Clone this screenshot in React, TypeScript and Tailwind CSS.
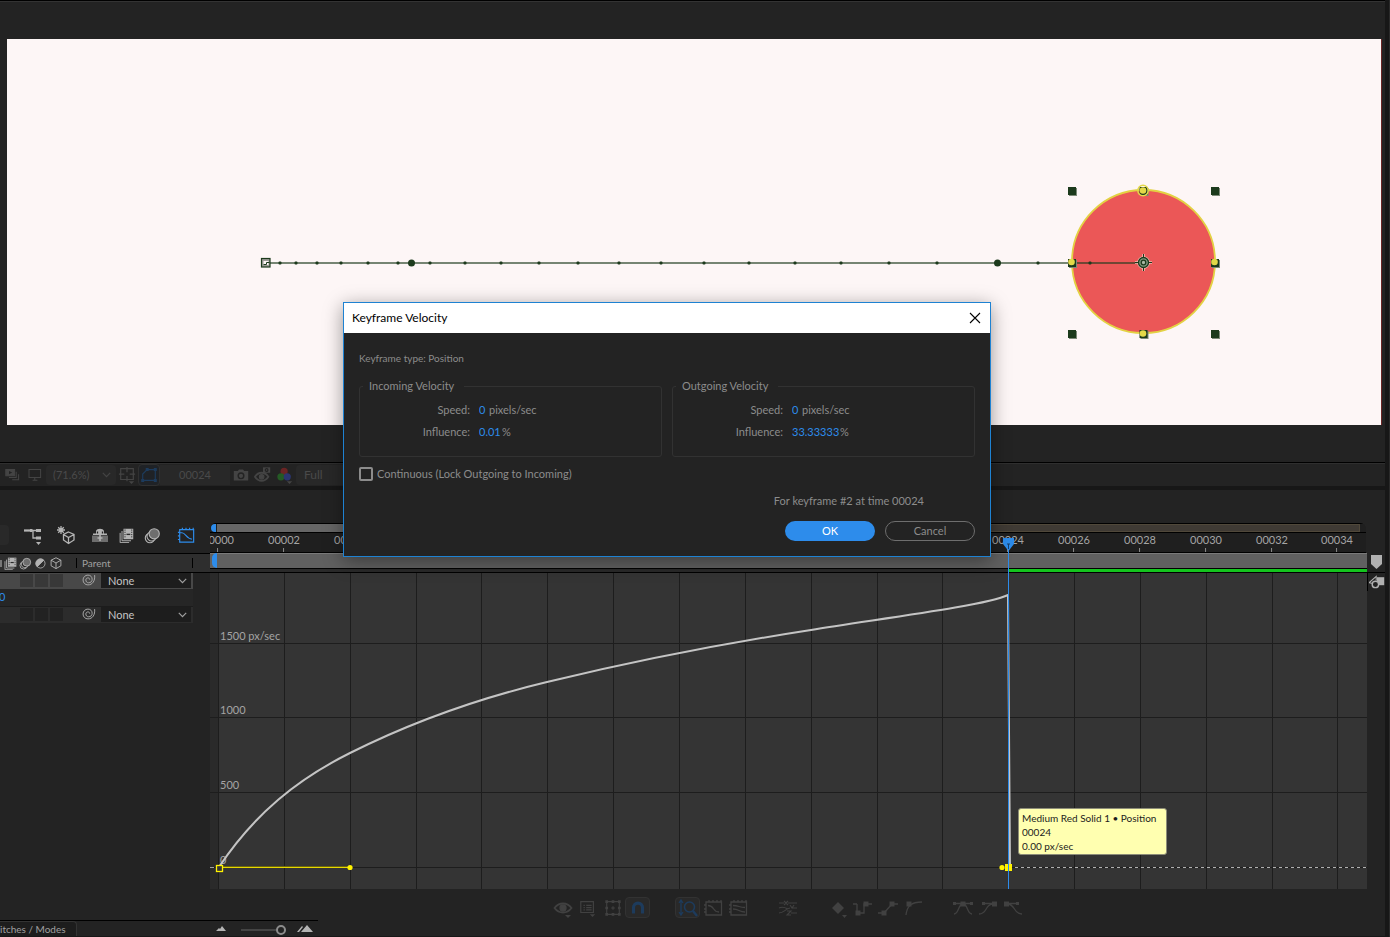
import { useState } from "react";
import type { ReactNode } from "react";

const STEP = 65.85;
const ORIGIN = 8;
const FRAMES = Array.from({ length: 18 }, (_, i) => i * 2);
const VALUE_LINES = [
  { y: 70, text: "1500 px/sec" },
  { y: 144, text: "1000" },
  { y: 219, text: "500" },
  { y: 294, text: "0" },
];
const PATH_DOTS = [
  273, 289, 310, 334, 361, 391, 423, 458, 494, 532, 571, 612, 654, 697, 742, 788, 834, 882, 930, 1031, 1083,
];

const frameLabel = (n: number) => String(n).padStart(5, "0");

function Icon({ size = 20, className = "", children }: { size?: number; className?: string; children: ReactNode }) {
  return (
    <svg
      width={size}
      height={size}
      viewBox="0 0 20 20"
      fill="none"
      stroke="currentColor"
      strokeWidth={1.3}
      className={className}
      aria-hidden="true"
    >
      {children}
    </svg>
  );
}

function Chevron({ className = "" }: { className?: string }) {
  return (
    <svg width="9" height="6" viewBox="0 0 9 6" fill="none" stroke="currentColor" strokeWidth="1.2" className={className} aria-hidden="true">
      <path d="M.8.8 4.5 4.6 8.2.8" />
    </svg>
  );
}

function Composition() {
  return (
    <div className="ml-[7px] mr-[3px] mt-[37px] h-[386px] overflow-hidden border-r border-[#6b2525] bg-[#fdf6f6]">
      <svg width="100%" height="386" role="img" aria-label="Composition view">
        <circle cx="1136.5" cy="222.5" r="71.5" fill="#eb5757" stroke="#e3d243" strokeWidth="1.8" />
        {/* motion path */}
        <line x1="263" x2="1136" y1="224" y2="224" stroke="#1c3a1c" strokeOpacity=".6" strokeWidth="2" />
        {PATH_DOTS.map((x) => (
          <rect key={x} x={x - 1.5} y="222.5" width="3" height="3" rx="1" fill="#1c3a1c" />
        ))}
        <circle cx="404.5" cy="224" r="3.5" fill="#1c3a1c" />
        <circle cx="990.5" cy="224" r="3.5" fill="#1c3a1c" />
        <rect x="254.5" y="219.5" width="8.5" height="8.5" fill="#9d9d98" stroke="#1c3a1c" strokeWidth="1.2" />
        <path d="M256.5 222h5v4h-5z" fill="#fdf6f6" />
        <path d="M256.5 225.5h3v-2h3" stroke="#1c3a1c" fill="none" />
        {/* layer handles */}
        {[1065, 1136.5, 1208].map((x) =>
          [152, 224, 295].map((y) =>
            x === 1136.5 && y === 224 ? null : (
              <g key={`${x}-${y}`}>
                <rect x={x - 3} y={y - 3} width="8" height="8" fill="#7d8a78" />
                <rect x={x - 4} y={y - 4} width="8" height="8" fill="#1c3a1c" />
              </g>
            ),
          ),
        )}
        <g fill="#e3d948">
          <circle cx="1064.5" cy="223" r="3.3" />
          <circle cx="1207.5" cy="223" r="3.3" />
          <circle cx="1136" cy="294.5" r="3.3" />
          <circle cx="1136" cy="151.5" r="3.3" />
          <circle cx="1136" cy="151.5" r="5.2" fill="none" stroke="#e3d948" strokeWidth="1.4" />
        </g>
        {/* anchor point */}
        <g stroke="#f0b9b0" fill="none" strokeWidth="2.6">
          <circle cx="1136.5" cy="223.5" r="5" />
          <path d="M1136.5 215v17M1128 223.5h17" />
        </g>
        <circle cx="1136.5" cy="223.5" r="5" fill="#7f9a80" stroke="#1c3a1c" strokeWidth="1.3" />
        <circle cx="1136.5" cy="223.5" r="2.3" fill="#a9b8a4" stroke="#1c3a1c" strokeWidth="1.3" />
        <path d="M1136.5 215v4M1136.5 228v4M1128 223.5h4M1141 223.5h4" stroke="#1c3a1c" />
      </svg>
    </div>
  );
}

const slot = "flex h-[22px] w-[22px] shrink-0 items-center justify-center";

function ViewerToolbar() {
  return (
    <div className="flex h-[22px] items-center pl-[2px] text-[#444]">
      <button type="button" aria-label="Always preview" className={slot}>
        <Icon size={16}>
          <path d="M1 3h11v8H1z" fill="currentColor" />
          <path d="M5 5v4l4-2z" fill="#232323" stroke="none" />
          <path d="M14 6v7H5M17 9v7H9" />
        </Icon>
      </button>
      <button type="button" aria-label="Primary viewer" className={slot}>
        <Icon size={16}>
          <path d="M2.5 3h14.5v10H2.5zM7 16.5h6M9.7 13v3" />
        </Icon>
      </button>
      <label className="relative h-[20px] w-[70px] shrink-0 rounded-sm bg-[#282828]">
        <select aria-label="Magnification" className="block h-full w-full appearance-none bg-transparent pl-[7px] text-[11px] leading-[20px] text-[#4a4a4a] outline-none">
          <option>(71.6%)</option>
        </select>
        <Chevron className="pointer-events-none absolute right-[5px] top-[7px]" />
      </label>
      <button type="button" aria-label="Grid and guides" className={slot}>
        <Icon size={18}>
          <path d="M3 3h14v12H3zM10 1v6M10 11v6M1 9h6M13 9h6" />
          <path d="M12 17h6l-3 3z" fill="currentColor" stroke="none" />
        </Icon>
      </button>
      <button type="button" aria-label="Mask visibility" className={`${slot} rounded-sm border border-[#303030] bg-[#1f2226] text-[#1d3b5c]`}>
        <Icon size={18}>
          <path d="M3 16V9l5-5h9v12z" />
          <path d="M2 15h2v2H2zM16 15h2v2h-2zM16 3h2v2h-2zM7 3h2v2H7z" fill="currentColor" />
        </Icon>
      </button>
      <button type="button" className="h-[20px] w-[70px] shrink-0 bg-[#282828] text-center text-[11px] leading-[20px] text-[#4a4a4a]">
        00024
      </button>
      <button type="button" aria-label="Take snapshot" className={slot}>
        <Icon size={16}>
          <path d="M1 5h5l1.5-2h5L14 5h5v12H1z" fill="currentColor" stroke="none" />
          <circle cx="10" cy="11" r="3.5" stroke="#232323" strokeWidth="1.8" />
        </Icon>
      </button>
      <button type="button" aria-label="Show snapshot" className={slot}>
        <Icon size={18}>
          <path d="M1 12c4-6 11-6 15 0-4 6-11 6-15 0z" strokeWidth="2" />
          <circle cx="8.5" cy="12" r="2.5" fill="currentColor" />
          <path d="M10 1.5h8v6h-8z" fill="currentColor" stroke="none" />
          <circle cx="14" cy="4.5" r="1.5" stroke="#232323" />
        </Icon>
      </button>
      <button type="button" aria-label="Show channel" className={slot}>
        <Icon size={18}>
          <circle cx="9" cy="6" r="4" fill="#6a2424" stroke="none" />
          <circle cx="5.5" cy="12" r="4" fill="#245a24" stroke="none" />
          <circle cx="12.5" cy="12" r="4" fill="#2b3570" stroke="none" />
          <path d="M12 17h6l-3 3z" fill="currentColor" stroke="none" />
        </Icon>
      </button>
      <select aria-label="Resolution" className="h-[20px] w-[90px] appearance-none rounded-sm bg-[#282828] pl-[8px] text-[12px] leading-[20px] text-[#4a4a4a] outline-none">
        <option>Full</option>
      </select>
    </div>
  );
}

function Shutter() {
  return (
    <>
      <circle cx="7" cy="13" r="5.5" />
      <circle cx="9" cy="11" r="5.5" fill="#232323" />
      <circle cx="12" cy="8" r="6" fill="#6e6e6e" />
    </>
  );
}

function Film() {
  return (
    <>
      <path d="M6 1h13v14H6z" fill="currentColor" stroke="none" />
      <path d="M8 2v12M17 2v12" stroke="#2a2a2a" strokeDasharray="1.5 1.5" />
      <path d="M10 8.5h5" stroke="#2a2a2a" strokeWidth="1.8" />
      <path d="M4 4v13h12M1.500 6.500v13h12" />
    </>
  );
}

function Cube() {
  return <path d="M10 2.5 17 6v8l-7 4-7-4V6zM3 6l7 4 7-4M10 10v8" />;
}

const tool = "flex h-[20px] w-[26px] shrink-0 items-center justify-center";

function ParentSelect({ name }: { name: string }) {
  return (
    <label className="relative h-[15px] w-[90px] bg-[#1d1d1d]">
      <select aria-label={name} className="block h-[15px] w-full appearance-none bg-transparent pl-[7px] text-[11px] leading-[15px] text-[#c4c4c4] outline-none">
        <option>None</option>
      </select>
      <Chevron className="pointer-events-none absolute right-[4px] top-[5px] text-[#a0a0a0]" />
    </label>
  );
}

function LayerRow({ name, selected }: { name: string; selected?: boolean }) {
  const cell = selected ? "h-[13px] w-[13px] bg-[#383838]" : "h-[13px] w-[13px] bg-[#222]";
  return (
    <div className={`flex h-[16px] w-[193px] items-start ${selected ? "bg-[#484848]" : "bg-[#2c2c2c]"}`}>
      <div className="ml-[20px] mt-px flex gap-[2px]">
        <span className={cell} />
        <span className={cell} />
        <span className={cell} />
      </div>
      <button type="button" aria-label="Parent pick whip" className="ml-[18px] mr-[5px] flex w-[15px] justify-center text-[#a8a8a8]">
        <Icon size={14}>
          <path
            d="M18 3c1 8-3 14-9.500 14C4.500 17 1.500 14 1.500 10S4.500 3 8.500 3s6 2.800 6 6-2.200 5-5 5-4-2-4-4 1.500-3 3-3 2.500 1 2.500 2.500"
            strokeWidth="1.4"
          />
        </Icon>
      </button>
      <ParentSelect name={name} />
    </div>
  );
}

function LayerColumn() {
  return (
    <div className="flex w-[210px] shrink-0 flex-col">
      <div className="flex h-[63px] items-end text-[#b4b4b4]">
        <div className="mb-[8px] flex">
          <span className="h-[20px] w-[9px] rounded-r-sm bg-[#292929]" />
          <button type="button" aria-label="Mini-flowchart" className={`${tool} ml-[11px]`}>
            <Icon size={20}>
              <path d="M1 5.500h12M10 5.500V13h4" />
              <path d="M1 4.500h5v2H1zM6.500 4h3v3h-3zM13 4h5v3h-5zM13 11.500h5v3h-5z" fill="currentColor" stroke="none" />
              <path d="M13 17h5l-2.500 3z" fill="currentColor" stroke="none" />
            </Icon>
          </button>
          <button type="button" aria-label="Draft 3D" className={`${tool} ml-[7px]`}>
            <Icon size={20}>
              <path d="M12.5 7 18 9.5V15l-5.5 3.5L7.5 15V9.5zM7.5 9.5l5 3 5.5-3M12.5 12.5v6" />
              <path d="M5 1v8M1 5h8M2.2 2.2l5.6 5.6M7.8 2.2 2.2 7.8" />
            </Icon>
          </button>
          <button type="button" aria-label="Hide shy layers" className={`${tool} ml-[8px]`}>
            <Icon size={20}>
              <path d="M2 10.500h16V17H2z" fill="#6e6e6e" stroke="none" />
              <path d="M3 10V8.500h3V6c1-3 7-3 8 0v2.500h3V10z" fill="currentColor" stroke="none" />
              <path d="M7.500 6.500v2M12.500 6.500v2" stroke="#232323" />
              <path d="M10 9v7M7.500 13h5" strokeWidth="1.6" />
            </Icon>
          </button>
          <button type="button" aria-label="Frame blending" className={tool}>
            <Icon size={15}>
              <Film />
            </Icon>
          </button>
          <button type="button" aria-label="Motion blur" className={tool}>
            <Icon size={17}>
              <Shutter />
            </Icon>
          </button>
          <button type="button" aria-label="Graph editor" className={`${tool} ml-[8px] text-[#2d8ceb]`}>
            <Icon size={18}>
              <path d="M3 4h15.5v14H3z" />
              <path d="M3 7.5h2.5c4 0 5 7 11 7M1 7h2M1 11h2M1 15h2M6 2v2M10 2v2M14 2v2M18 2v2" />
            </Icon>
          </button>
        </div>
      </div>
      <div className="flex h-[20px] items-center border-b border-t border-black bg-[#2e2e2e] text-[10px] text-[#a0a0a0]">
        <span className="w-[4px] overflow-hidden">
          <span className="block h-[7px] w-[2px] bg-[#777]" />
        </span>
        <div className="flex items-center gap-[2px] text-[#b4b4b4]">
          <Icon size={13}>
            <Film />
          </Icon>
          <Icon size={13}>
            <Shutter />
          </Icon>
          <Icon size={13}>
            <circle cx="10" cy="10" r="7" />
            <path d="M5 15A7 7 0 0 1 15 5z" fill="currentColor" />
          </Icon>
          <Icon size={14}>
            <Cube />
          </Icon>
        </div>
        <span className="ml-[13px] h-[10px] w-px bg-black" />
        <span className="ml-[5px] w-[110px]">Parent</span>
        <span className="h-[10px] w-px bg-black" />
      </div>
      <LayerRow name="Parent of layer 1" selected />
      <div className="flex h-[18px] w-[193px] items-center border-b border-[#1c1c1c] bg-[#262626] text-[11px] text-[#2d8ceb]">
        <span className="-ml-px">0</span>
      </div>
      <LayerRow name="Parent of layer 2" />
    </div>
  );
}

function Ruler() {
  return (
    <div className="pt-[33px]">
      <div className="mr-[1px] h-[30px] overflow-hidden rounded-tl-[6px] rounded-tr-[6px] bg-[#1f1f1f]">
        <div className="flex h-[10px] border-b border-t border-black pr-[6px]">
          <span className="ml-px mr-[1px] w-[5px] shrink-0 rounded-l-full bg-[#2d8ceb]" />
          <span className="w-2/5 bg-[#666]" />
          <span className="flex-1 border border-[#50483a] bg-[#3f3a34]" />
        </div>
        <div className="relative h-[19px] overflow-hidden text-[11px] leading-[14px] text-[#a4a4a4]">
          {FRAMES.map((frame, i) => (
            <span
              key={frame}
              className="absolute top-0 flex h-full -translate-x-1/2 flex-col items-center justify-between"
              style={{ left: Math.round(ORIGIN + i * STEP) }}
            >
              {frameLabel(frame)}
              <span className="h-[4px] w-px bg-[#8a8a8a]" />
            </span>
          ))}
        </div>
        <div className="h-px bg-black" />
      </div>
      <div className="flex h-[15px] border-t border-[#7a7a7a] bg-[#606060]">
        <span className="-mt-px ml-[2px] h-[15px] w-[5px] rounded-l-full bg-[#2d8ceb]" />
      </div>
      <div className="h-[5px] border-b border-t border-black bg-[#2a2a2a]">
        <div className="ml-[798px] h-[3px] bg-[#14c41e]" />
      </div>
    </div>
  );
}

function SpeedGraph() {
  return (
    <div className="relative h-[316px] bg-[#2a2a2a]">
      <svg width="100%" height="316" className="block" role="img" aria-label="Speed graph">
        <rect x={ORIGIN} width="100%" height="316" fill="#343434" />
        <g stroke="#1d1d1d" shapeRendering="crispEdges">
          {FRAMES.map((frame, i) => (
            <line key={frame} x1={ORIGIN + i * STEP + 0.5} x2={ORIGIN + i * STEP + 0.5} y1="0" y2="316" />
          ))}
          {VALUE_LINES.map((v) => (
            <line key={v.y} x1="0" x2="100%" y1={v.y + 0.5} y2={v.y + 0.5} />
          ))}
        </g>
        <line x1="0" x2="4" y1="294.5" y2="294.5" stroke="#a0a0a0" />
        <line x1="805" x2="100%" y1="294.5" y2="294.5" stroke="#b0b0b0" strokeDasharray="3 3" />
        <g fill="#a4a4a4" fontSize="11">
          {VALUE_LINES.map((v) => (
            <text key={v.text} x="10" y={v.y - 3}>
              {v.text}
            </text>
          ))}
        </g>
        <path
          d="M9 294C45 240 88 206 140 180C200 150 266 126 337 109C424 88 510 71 601 57C660 47 775 33 798 22L800 294"
          fill="none"
          stroke="#c4c4c4"
          strokeWidth="2"
        />
        <rect x="13" y="293" width="127" height="1" fill="#6b6510" />
        <rect x="13" y="294" width="127" height="1" fill="#e6d800" />
        <rect x="6.5" y="292.5" width="6" height="6" fill="#343434" stroke="#fff200" strokeWidth="1.3" />
        <circle cx="140" cy="294.5" r="2.6" fill="#fff200" />
        <circle cx="792" cy="294.5" r="2.6" fill="#fff200" />
        <rect x="795" y="291" width="7" height="7" fill="#fff200" />
      </svg>
      <div
        role="tooltip"
        className="absolute left-[808px] top-[235px] w-[149px] whitespace-nowrap rounded-[3px] border border-[#8c8c78] bg-[#ffffb0] px-[3px] pb-px pt-[2px] text-[10px] leading-[14px] text-[#1c1c1c]"
      >
        <p>Medium Red Solid 1 • Position</p>
        <p>00024</p>
        <p>0.00 px/sec</p>
      </div>
    </div>
  );
}

function Playhead() {
  return (
    <svg width="11" height="352" className="pointer-events-none absolute left-[793px] top-[47px]" aria-hidden="true">
      <path d="M0 1h11v6L5.5 14 0 7z" fill="#2d8ceb" />
      <path d="M4 7h3M5.5 7v5" stroke="#173f6b" />
      <path d="M5.5 13v339" stroke="#2d8ceb" strokeWidth="1" />
    </svg>
  );
}

const gtool = "flex h-[21px] w-[25px] items-center justify-center";
const gtoolOn = "flex h-[21px] w-[25px] items-center justify-center rounded-sm border border-[#323232] bg-[#292929] text-[#1d3b5c]";

function GraphToolbar() {
  const corner = <path d="M12 17h6l-3 3z" fill="currentColor" stroke="none" />;
  return (
    <div className="ml-[232px] flex gap-[25px] pt-[8px] text-[#414141]">
      <div className="flex">
        <button type="button" aria-label="Show properties" className={gtool}>
          <Icon size={20}>
            <path d="M1.5 10c4.5-6 12.5-6 17 0-4.5 6-12.5 6-17 0z" strokeWidth="1.8" />
            <circle cx="10" cy="10" r="3" fill="currentColor" />
            {corner}
          </Icon>
        </button>
        <button type="button" aria-label="Graph type and options" className={gtool}>
          <Icon size={18}>
            <path d="M2 3h14v12H2zM5 7h1.5M8 7h6M5 9.5h1.5M8 9.5h6M5 12h1.5M8 12h6" />
            {corner}
          </Icon>
        </button>
        <button type="button" aria-label="Show transform box" className={gtool}>
          <Icon size={18}>
            <path d="M3 3h14v14H3z" />
            <path d="M1.5 1.5h3v3h-3zM8.5 1.5h3v3h-3zM15.5 1.5h3v3h-3zM1.5 8.5h3v3h-3zM15.5 8.5h3v3h-3zM1.5 15.5h3v3h-3zM8.5 15.5h3v3h-3zM15.5 15.5h3v3h-3z" fill="currentColor" stroke="none" />
            <path d="M10 8v4M8 10h4" />
          </Icon>
        </button>
        <button type="button" aria-label="Snap" className={gtoolOn}>
          <Icon size={18}>
            <path d="M5 16V9.5a5 5 0 0 1 10 0V16" strokeWidth="3.5" />
          </Icon>
        </button>
      </div>
      <div className="flex">
        <button type="button" aria-label="Auto-zoom graph height" className={gtoolOn}>
          <Icon size={20}>
            <path d="M3 3v13M1 5l2-3 2 3M1 14l2 3 2-3" />
            <circle cx="11.5" cy="9" r="5" strokeWidth="1.6" />
            <path d="m15 13 4 5" strokeWidth="2.4" />
          </Icon>
        </button>
        <button type="button" aria-label="Fit selection to view" className={gtool}>
          <Icon size={20}>
            <path d="M3 4h15.5v13H3zM5 7.5c7 0 4 6.5 11 6.5M1 7h2M1 11h2M1 14h2M6 2v2M10 2v2M14 2v2M18 2v2" />
          </Icon>
        </button>
        <button type="button" aria-label="Fit all graphs to view" className={gtool}>
          <Icon size={20}>
            <path d="M3 4h15.5v13H3zM5 7.5c6 0 6 2 12 2M5 11c6 0 6 3 12 3M1 7h2M1 11h2M1 14h2M6 2v2M10 2v2M14 2v2M18 2v2" />
          </Icon>
        </button>
      </div>
      <button type="button" aria-label="Separate dimensions" className={gtool}>
        <Icon size={20}>
          <path d="M1 5h5M10 5h9M1 10c4-2 7 0 9 1M14 10h5M1 15c5 0 6-4 11-5M13 15h6M6 3l4 4M10 3 6 7M12 7l2 3 2-3M9 13h4l-4 4h4" strokeWidth="1.1" />
        </Icon>
      </button>
      <div className="flex">
        <button type="button" aria-label="Edit keyframes" className={gtool}>
          <Icon size={20}>
            <path d="m10 4 6 6-6 6-6-6z" fill="currentColor" stroke="none" />
            <path d="M14 17h5l-2.5 3z" fill="currentColor" stroke="none" />
          </Icon>
        </button>
        <button type="button" aria-label="Convert to hold" className={gtool}>
          <Icon size={20}>
            <path d="M0 6h4M5 15h6V6h8M4 6v9" />
            <path d="M2.5 12.5h5v5h-5zM10.5 3.5h5v5h-5z" fill="currentColor" stroke="none" />
          </Icon>
        </button>
        <button type="button" aria-label="Convert to linear" className={gtool}>
          <Icon size={20}>
            <path d="M0 15h6l8-9h6" />
            <path d="M3.5 12.5h5v5h-5zM11.5 3.5h5v5h-5z" fill="currentColor" stroke="none" />
          </Icon>
        </button>
        <button type="button" aria-label="Convert to auto bezier" className={gtool}>
          <Icon size={20}>
            <path d="M3 17c1-9 5-13 16-13" />
            <path d="M3.5 3.5h5v5h-5z" fill="currentColor" stroke="none" />
          </Icon>
        </button>
      </div>
      <div className="flex">
        <button type="button" aria-label="Easy ease" className={gtool}>
          <Icon size={20}>
            <path d="M1 16c5 0 4-10 9-10s4 10 9 10M1 5.5h18" />
            <path d="M7.5 3.5h5v5h-5zM0 4h3v3H0zM17 4h3v3h-3z" fill="currentColor" stroke="none" />
          </Icon>
        </button>
        <button type="button" aria-label="Easy ease in" className={gtool}>
          <Icon size={20}>
            <path d="M1 16c9 0 5-10 15-10M5 5.5h12" />
            <path d="M14 3.5h5v5h-5zM4 4h3v3H4z" fill="currentColor" stroke="none" />
          </Icon>
        </button>
        <button type="button" aria-label="Easy ease out" className={gtool}>
          <Icon size={20}>
            <path d="M19 16C10 16 13 6 4 6M3 5.5h12" />
            <path d="M1 3.5h5v5H1zM13 4h3v3h-3z" fill="currentColor" stroke="none" />
          </Icon>
        </button>
      </div>
    </div>
  );
}

function Timeline() {
  return (
    <section className="bg-[#232323]">
      <div className="flex">
        <LayerColumn />
        <div className="relative min-w-0 flex-1">
          <Ruler />
          <SpeedGraph />
          <Playhead />
        </div>
        <div className="w-[18px] shrink-0 pt-[64px] text-[#b0b0b0]">
          <button type="button" aria-label="Composition marker" className="flex h-[19px] w-full justify-center border-b border-black">
            <svg width="11" height="15" viewBox="0 0 11 15" aria-hidden="true">
              <path d="M0 1h11v9l-5.5 5L0 10z" fill="currentColor" />
            </svg>
          </button>
          <button type="button" aria-label="Open composition" className="flex h-[18px] w-full items-center justify-center border-l border-black">
            <Icon size={16}>
              <path d="M10 4h9v10h-9z" fill="currentColor" stroke="none" />
              <path d="M0 11l9-8v5M0 11l5 1" />
              <circle cx="8" cy="13" r="4" fill="#232323" strokeWidth="1.8" />
            </Icon>
          </button>
        </div>
      </div>
      <div className="flex h-[48px] border-b border-[#171717]">
        <div className="mt-[31px] flex h-[16px] w-[318px] shrink-0 items-center border-t border-black">
          <button type="button" className="h-[15px] w-[77px] overflow-hidden whitespace-nowrap rounded-tr-sm border-r border-t border-[#333] bg-[#1d1d1d] text-left text-[10px] leading-[15px] text-[#a0a0a0]">
            itches / Modes
          </button>
          <svg width="10" height="5" viewBox="0 0 10 5" className="ml-[139px] text-[#b4b4b4]" aria-hidden="true">
            <path d="M0 5 3 2l1 1 2-3 4 5z" fill="currentColor" />
          </svg>
          <input
            type="range"
            aria-label="Zoom"
            defaultValue={100}
            className="ml-[15px] mt-[2px] h-[10px] w-[45px] appearance-none bg-transparent [&::-webkit-slider-runnable-track]:h-[2px] [&::-webkit-slider-runnable-track]:bg-[#444] [&::-webkit-slider-thumb]:-mt-[4px] [&::-webkit-slider-thumb]:h-[10px] [&::-webkit-slider-thumb]:w-[10px] [&::-webkit-slider-thumb]:appearance-none [&::-webkit-slider-thumb]:rounded-full [&::-webkit-slider-thumb]:border-2 [&::-webkit-slider-thumb]:border-[#8c8c8c] [&::-webkit-slider-thumb]:bg-[#232323]"
          />
          <svg width="16" height="7" viewBox="0 0 16 7" className="ml-[11px] text-[#b4b4b4]" aria-hidden="true">
            <path d="M0 7 5 1l1 1-4 5zM4 7l6-7 6 7z" fill="currentColor" />
          </svg>
        </div>
        <GraphToolbar />
      </div>
    </section>
  );
}

function VelocityGroup({ title, influence, wide }: { title: string; influence: string; wide?: boolean }) {
  const [speed, setSpeed] = useState("0");
  const [amount, setAmount] = useState(influence);
  const id = title.split(" ")[0].toLowerCase();
  const row = "flex h-[22px] items-center";
  return (
    <fieldset className="h-[79px] min-w-0 flex-1 rounded-[3px] border border-[#323232]">
      <legend className="ml-[3px] pl-[6px] pr-[10px] leading-[16px]">{title}</legend>
      <div className={`${row} mt-[5px]`}>
        <label htmlFor={`${id}-speed`} className="w-[110px] text-right">
          Speed:
        </label>
        <input id={`${id}-speed`} value={speed} onChange={(e) => setSpeed(e.target.value)} className="ml-[9px] w-[10px] bg-transparent text-[#2d8ceb] outline-none" />
        pixels/sec
      </div>
      <div className={row}>
        <label htmlFor={`${id}-influence`} className="w-[110px] text-right">
          Influence:
        </label>
        <input
          id={`${id}-influence`}
          value={amount}
          onChange={(e) => setAmount(e.target.value)}
          className={`ml-[9px] bg-transparent text-[#2d8ceb] outline-none ${wide ? "w-[48px]" : "w-[23px]"}`}
        />
        %
      </div>
    </fieldset>
  );
}

function VelocityDialog() {
  const [locked, setLocked] = useState(false);
  return (
    <div
      role="dialog"
      aria-labelledby="velocity-title"
      className="absolute left-[343px] top-[302px] w-[648px] border border-[#1e82d2] bg-[#232323] text-[11px] leading-[16px] text-[#8c8c8c] shadow-[0_4px_18px_rgba(0,0,0,0.4)]"
    >
      <div className="flex h-[30px] items-center justify-between bg-white pl-[8px] pr-[9px] text-black">
        <h1 id="velocity-title" className="text-[12px]">
          Keyframe Velocity
        </h1>
        <button type="button" aria-label="Close">
          <svg width="12" height="12" viewBox="0 0 12 12" stroke="currentColor" strokeWidth="1.1" aria-hidden="true">
            <path d="m1 1 10 10M11 1 1 11" />
          </svg>
        </button>
      </div>
      <div className="px-[15px] pb-[15px] pt-[17px]">
        <p className="text-[10px]">Keyframe type: Position</p>
        <div className="mt-3 flex gap-[10px]">
          <VelocityGroup title="Incoming Velocity" influence="0.01" />
          <VelocityGroup title="Outgoing Velocity" influence="33.33333" wide />
        </div>
        <label className="mt-[9px] flex items-center gap-[4px]">
          <input
            type="checkbox"
            checked={locked}
            onChange={(e) => setLocked(e.target.checked)}
            className="h-[14px] w-[14px] appearance-none rounded-[2px] border-2 border-[#8c8c8c] checked:bg-[#2d8ceb]"
          />
          Continuous (Lock Outgoing to Incoming)
        </label>
        <p className="mt-[11px] pr-[51px] text-right">For keyframe #2 at time 00024</p>
        <div className="mt-3 flex justify-end gap-[10px]">
          <button type="button" className="h-[20px] w-[90px] rounded-full bg-[#2d8ceb] text-white">
            OK
          </button>
          <button type="button" className="h-[20px] w-[90px] rounded-full border border-[#6e6e6e]">
            Cancel
          </button>
        </div>
      </div>
    </div>
  );
}

export default function App() {
  return (
    <div className="relative flex min-h-screen overflow-hidden bg-[#232323] font-['Lato','Open_Sans',sans-serif]">
      <main className="min-w-0 flex-1">
        <section className="border-b-4 border-t border-b-[#171717] border-t-black">
          <div className="border-t border-[#333]">
            <Composition />
          </div>
          <div className="mt-[37px] border-t border-black">
            <div className="border-t border-[#2f2f2f]">
              <ViewerToolbar />
            </div>
          </div>
        </section>
        <Timeline />
      </main>
      <div className="w-[5px] shrink-0 border-r border-[#2a2a2a] bg-[#171717]" />
      <VelocityDialog />
    </div>
  );
}
